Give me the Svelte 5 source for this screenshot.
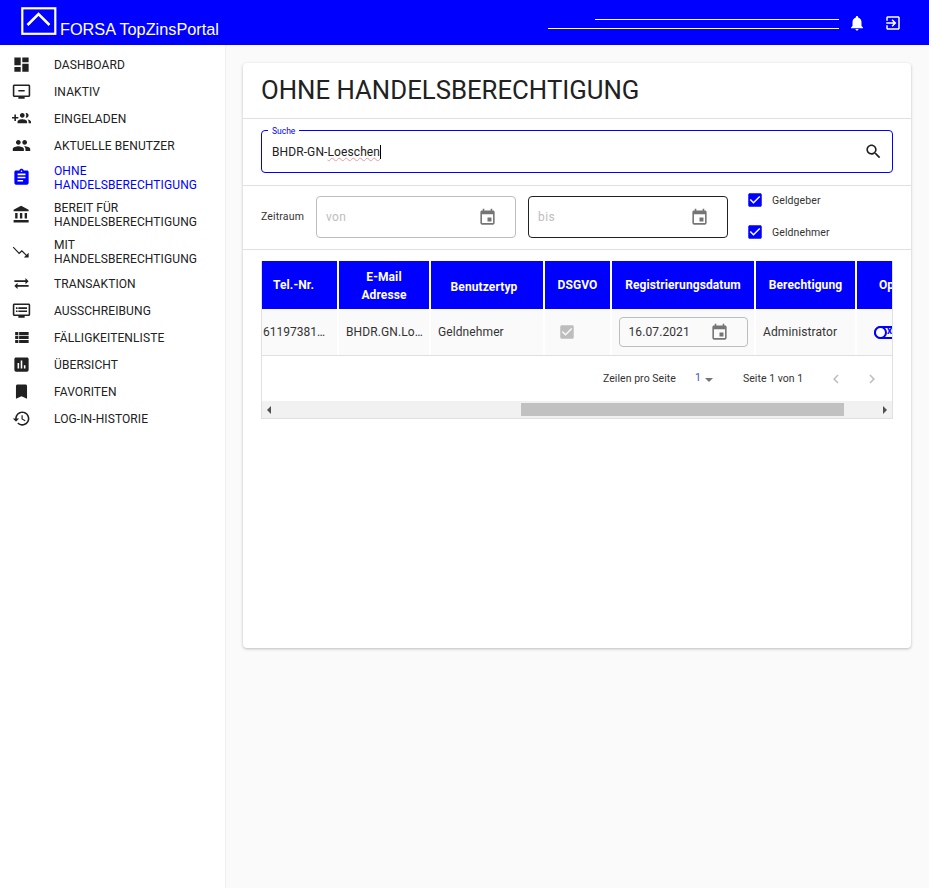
<script>
  const p = {
    dashboard: "M3 13h8V3H3v10zm0 8h8v-6H3v6zm10 0h8V11h-8v10zm0-18v6h8V3h-8z",
    inactive: "M21 3H3c-1.1 0-2 .9-2 2v12c0 1.1.9 2 2 2h5v2h8v-2h5c1.1 0 2-.9 2-2V5c0-1.1-.9-2-2-2zm0 14H3V5h18v12zM8 10h8v2H8z",
    groupAdd: "M8 10H5V7H3v3H0v2h3v3h2v-3h3v-2zm10 1c1.66 0 2.99-1.34 2.99-3S19.66 5 18 5c-.32 0-.63.05-.91.14.57.81.9 1.79.9 2.86s-.34 2.04-.9 2.86c.28.09.59.14.91.14zm-5 0c1.66 0 2.99-1.34 2.99-3S14.66 5 13 5s-3 1.34-3 3 1.34 3 3 3zm6.62 2.16c.83.73 1.38 1.66 1.38 2.84v2h3v-2c0-1.54-2.37-2.49-4.38-2.84zM13 13c-2 0-6 1-6 3v2h12v-2c0-2-4-3-6-3z",
    people: "M16 11c1.66 0 2.99-1.34 2.99-3S17.66 5 16 5c-1.66 0-3 1.34-3 3s1.34 3 3 3zm-8 0c1.66 0 2.99-1.34 2.99-3S9.66 5 8 5C6.34 5 5 6.34 5 8s1.34 3 3 3zm0 2c-2.33 0-7 1.17-7 3.5V19h14v-2.5c0-2.33-4.67-3.5-7-3.5zm8 0c-.29 0-.62.02-.97.05 1.16.84 1.97 1.97 1.97 3.45V19h6v-2.5c0-2.33-4.67-3.5-7-3.5z",
    assignment: "M19 3h-4.18C14.4 1.84 13.3 1 12 1c-1.3 0-2.4.84-2.82 2H5c-1.1 0-2 .9-2 2v14c0 1.1.9 2 2 2h14c1.1 0 2-.9 2-2V5c0-1.1-.9-2-2-2zm-7 0c.55 0 1 .45 1 1s-.45 1-1 1-1-.45-1-1 .45-1 1-1zm2 14H7v-2h7v2zm3-4H7v-2h10v2zm0-4H7V7h10v2z",
    bank: "M4 10v7h3v-7H4zm6 0v7h3v-7h-3zM2 22h19v-3H2v3zm14-12v7h3v-7h-3zm-4.5-9L2 6v2h19V6l-9.5-5z",
    trending: "M2 6L9 13.2L12.5 10L18.5 16L21 13.5V19.5H15L17.4 17.1L12.5 12.2L9 15.4L1 7.1z",
    swap: "M3 8h14V5l4 4-4 4v-3H3zM21 14H7v-3l-4 4 4 4v-3h14z",
    dvr: "M21 3H3c-1.1 0-2 .9-2 2v12c0 1.1.9 2 2 2h5v2h8v-2h5c1.1 0 1.99-.9 1.99-2L23 5c0-1.1-.9-2-2-2zm0 14H3V5h18v12zm-2-9H8v2h11V8zm0 4H8v2h11v-2zM7 8H5v2h2V8zm0 4H5v2h2v-2z",
    viewList: "M4 14h4v-4H4v4zm0 5h4v-4H4v4zM4 9h4V5H4v4zm5 5h12v-4H9v4zm0 5h12v-4H9v4zM9 5v4h12V5H9z",
    assessment: "M19 3H5c-1.1 0-2 .9-2 2v14c0 1.1.9 2 2 2h14c1.1 0 2-.9 2-2V5c0-1.1-.9-2-2-2zM9 17H7v-7h2v7zm4 0h-2V7h2v10zm4 0h-2v-4h2v4z",
    bookmark: "M17 3H7c-1.1 0-1.99.9-1.99 2L5 21l7-3 7 3V5c0-1.1-.9-2-2-2z",
    history: "M13 3c-4.97 0-9 4.03-9 9H1l3.89 3.89.07.14L9 12H6c0-3.87 3.13-7 7-7s7 3.13 7 7-3.13 7-7 7c-1.93 0-3.68-.79-4.94-2.06l-1.42 1.42C8.27 19.99 10.51 21 13 21c4.97 0 9-4.03 9-9s-4.03-9-9-9zm-1 5v5l4.28 2.54.72-1.21-3.5-2.08V8H12z",
    bell: "M12 22c1.1 0 2-.9 2-2h-4c0 1.1.89 2 2 2zm6-6v-5c0-3.07-1.64-5.64-4.5-6.32V4c0-.83-.67-1.5-1.5-1.5s-1.5.67-1.5 1.5v.68C7.63 5.36 6 7.92 6 11v5l-2 2v1h16v-1l-2-2z",
    exit: "M10.09 15.59L11.5 17l5-5-5-5-1.41 1.41L12.67 11H3v2h9.67l-2.58 2.59zM19 3H5c-1.11 0-2 .9-2 2v4h2V5h14v14H5v-4H3v4c0 1.1.89 2 2 2h14c1.1 0 2-.9 2-2V5c0-1.1-.9-2-2-2z",
    search: "M15.5 14h-.79l-.28-.27C15.41 12.59 16 11.11 16 9.5 16 5.91 13.09 3 9.5 3S3 5.91 3 9.5 5.91 16 9.5 16c1.61 0 3.09-.59 4.23-1.57l.27.28v.79l5 4.99L20.49 19l-4.99-5zm-6 0C7.01 14 5 11.99 5 9.5S7.01 5 9.5 5 14 7.01 14 9.5 11.99 14 9.5 14z",
    event: "M17 12h-5v5h5v-5zM16 1v2H8V1H6v2H5c-1.11 0-1.99.9-1.99 2L3 19c0 1.1.89 2 2 2h14c1.1 0 2-.9 2-2V5c0-1.1-.9-2-2-2h-1V1h-2zm3 18H5V8h14v11z",
    check: "M19 3H5c-1.11 0-2 .9-2 2v14c0 1.1.89 2 2 2h14c1.11 0 2-.9 2-2V5c0-1.1-.89-2-2-2zm-9 14l-5-5 1.41-1.41L10 14.17l7.59-7.59L19 8l-9 9z",
    left: "M15.41 7.41L14 6l-6 6 6 6 1.41-1.41L10.83 12z",
    right: "M10 6L8.59 7.41 13.17 12l-4.58 4.59L10 18l6-6z"
  };

  const nav = [
    { icon: p.dashboard, label: "DASHBOARD" },
    { icon: p.inactive, label: "INAKTIV" },
    { icon: p.groupAdd, label: "EINGELADEN" },
    { icon: p.people, label: "AKTUELLE BENUTZER" },
    { icon: p.assignment, label: "OHNE HANDELSBERECHTIGUNG", active: true, tall: true },
    { icon: p.bank, label: "BEREIT FÜR HANDELSBERECHTIGUNG", tall: true },
    { icon: p.trending, label: "MIT HANDELSBERECHTIGUNG", tall: true },
    { icon: p.swap, label: "TRANSAKTION" },
    { icon: p.dvr, label: "AUSSCHREIBUNG" },
    { icon: p.viewList, label: "FÄLLIGKEITENLISTE" },
    { icon: p.assessment, label: "ÜBERSICHT" },
    { icon: p.bookmark, label: "FAVORITEN" },
    { icon: p.history, label: "LOG-IN-HISTORIE" }
  ];
</script>

{#snippet icon(d, size = 18, cls = "")}
  <svg class={cls} width={size} height={size} viewBox="0 0 24 24" fill="currentColor"><path {d} /></svg>
{/snippet}

<div class="page">
  <header>
    <div class="brand">
      <svg class="logo" width="36" height="29" viewBox="0 0 36 29" fill="none" stroke="#fff">
        <rect x="1.3" y="1.3" width="33" height="25.5" stroke-width="2.2" />
        <path d="M6.5 18 L17.5 7 L28.5 18" stroke-width="2.5" />
      </svg>
      <span class="brand-name">FORSA TopZinsPortal</span>
    </div>
    <div class="user-lines">
      <div class="line short"></div>
      <div class="line long"></div>
    </div>
    <div class="head-icons">
      {@render icon(p.bell, 18)}
      {@render icon(p.exit, 18)}
    </div>
  </header>

  <div class="body">
    <nav>
      {#each nav as item}
        <div class="nav-item" class:active={item.active} class:tall={item.tall}>
          <span class="nav-icon">{@render icon(item.icon, 19)}</span>
          <span class="nav-label">{item.label}</span>
        </div>
      {/each}
    </nav>

    <main>
      <section class="card">
        <div class="title-row"><h1>OHNE HANDELSBERECHTIGUNG</h1></div>

        <div class="search-row">
          <div class="search-box">
            <span class="legend">Suche</span>
            <span class="search-text">BHDR-GN-<span class="typo">Loeschen</span><span class="caret"></span></span>
            <span class="search-icon">{@render icon(p.search, 19)}</span>
          </div>
        </div>

        <div class="filter-row">
          <span class="range-label">Zeitraum</span>
          <div class="date-box">
            <span>von</span>
            {@render icon(p.event, 19)}
          </div>
          <div class="date-box focused">
            <span>bis</span>
            {@render icon(p.event, 19)}
          </div>
          <div class="checks">
            <div class="check-row">{@render icon(p.check, 18)}<span>Geldgeber</span></div>
            <div class="check-row">{@render icon(p.check, 18)}<span>Geldnehmer</span></div>
          </div>
        </div>

        <div class="table-area">
          <div class="table">
            <div class="grid head">
              <div class="h-tel">Tel.-Nr.</div>
              <div class="h-mail">E-Mail<br />Adresse</div>
              <div class="h-type">Benutzertyp</div>
              <div>DSGVO</div>
              <div>Registrierungsdatum</div>
              <div>Berechtigung</div>
              <div class="clip">Op</div>
            </div>
            <div class="grid row">
              <div class="tel">61197381…</div>
              <div class="mail">BHDR.GN.Lo…</div>
              <div class="type">Geldnehmer</div>
              <div class="dsgvo">{@render icon(p.check, 18)}</div>
              <div class="center">
                <div class="row-date">
                  <span>16.07.2021</span>
                  {@render icon(p.event, 19)}
                </div>
              </div>
              <div class="type">Administrator</div>
              <div class="toggle-cell">
                <div class="toggle"><i></i><b>x</b></div>
              </div>
            </div>
            <div class="pager">
              <span class="per-page">Zeilen pro Seite</span>
              <span class="count">1</span>
              <span class="caret-down"></span>
              <span class="page-of">Seite 1 von 1</span>
              {@render icon(p.left, 18)}
              {@render icon(p.right, 18)}
            </div>
            <div class="scrollbar">
              <span class="arrow-l"></span>
              <div class="thumb"></div>
              <span class="arrow-r"></span>
            </div>
          </div>
        </div>
      </section>
    </main>
  </div>
</div>

<style>
  :global(body) {
    background: #fafafa;
    font-family: Roboto, "Noto Sans", sans-serif;
    color: #212121;
  }
  svg {
    display: block;
    flex: none;
  }
  .page {
    display: flex;
    flex-direction: column;
    height: 888px;
    overflow: hidden;
  }

  header {
    height: 45px;
    flex: none;
    background: #0000ff;
    color: #fff;
    display: flex;
    align-items: flex-start;
  }
  .brand {
    display: flex;
    align-items: flex-end;
    margin-left: 21px;
    padding-top: 7px;
    gap: 3px;
    width: 527px;
  }
  .brand-name {
    font-family: "Liberation Sans", Arial, sans-serif;
    font-size: 16.3px;
    line-height: 18px;
    margin-bottom: -2px;
  }
  .user-lines {
    width: 291px;
    padding-top: 19px;
  }
  .line {
    height: 1px;
    background: #fff;
    margin-left: auto;
  }
  .line.short {
    width: 244px;
    margin-bottom: 8px;
  }
  .line.long {
    width: 291px;
  }
  .head-icons {
    display: flex;
    gap: 18px;
    margin-left: 9px;
    padding-top: 14px;
  }

  .body {
    flex: 1;
    display: flex;
    min-height: 0;
  }
  nav {
    width: 225px;
    flex: none;
    background: #fff;
    border-right: 1px solid #f0f0f0;
    padding-top: 6px;
  }
  .nav-item {
    display: flex;
    align-items: center;
    height: 27px;
    padding-left: 12px;
    font-size: 12px;
    line-height: 14px;
    letter-spacing: 0.1px;
    color: #212121;
  }
  .nav-item.tall {
    height: 37px;
  }
  .nav-item.active {
    color: #0000ff;
  }
  .nav-icon {
    width: 42px;
    flex: none;
  }
  .nav-label {
    width: 160px;
  }

  main {
    flex: 1;
    padding: 18px 18px 0 17px;
    min-width: 0;
  }
  .card {
    height: 585px;
    background: #fff;
    border-radius: 4px;
    box-shadow: 0 1px 3px rgba(0, 0, 0, 0.25);
  }
  .title-row {
    height: 55px;
    border-bottom: 1px solid #e0e0e0;
    padding-left: 18px;
    display: flex;
    align-items: center;
  }
  h1 {
    margin: 0 0 2px;
    font-size: 25.75px;
    font-weight: 400;
    color: #212121;
    line-height: 52px;
  }
  .search-row {
    border-bottom: 1px solid #e0e0e0;
    padding: 11px 18px 0;
    box-sizing: border-box;
    height: 67px;
  }
  .search-box {
    position: relative;
    height: 43px;
    box-sizing: border-box;
    border: 1px solid #0000ff;
    border-radius: 4px;
    display: flex;
    align-items: center;
    justify-content: space-between;
    padding: 0 9px 0 10px;
  }
  .legend {
    position: absolute;
    left: 6px;
    top: -5px;
    padding: 0 4px;
    background: #fff;
    font-size: 8.5px;
    line-height: 10px;
    color: #0000ff;
  }
  .search-text {
    font-size: 12px;
    letter-spacing: 0.1px;
    line-height: 16px;
    color: #212121;
    display: flex;
  }
  .typo {
    text-decoration: underline wavy #ef9a9a 1px;
    text-underline-offset: 1px;
  }
  .caret {
    width: 1px;
    height: 14px;
    margin-top: 1px;
    background: #000;
  }
  .search-icon {
    color: #212121;
  }

  .filter-row {
    height: 64px;
    box-sizing: border-box;
    border-bottom: 1px solid #e0e0e0;
    padding: 10px 0 0 18px;
    display: flex;
    align-items: flex-start;
  }
  .range-label {
    width: 55px;
    font-size: 10.5px;
    line-height: 42px;
    letter-spacing: 0.15px;
    color: #333;
  }
  .date-box {
    width: 200px;
    height: 42px;
    box-sizing: border-box;
    border: 1px solid #bdbdbd;
    border-radius: 4px;
    display: flex;
    align-items: center;
    justify-content: space-between;
    padding: 0 18px 0 9px;
    font-size: 12px;
    letter-spacing: 0.4px;
    color: #bdbdbd;
    margin-right: 12px;
  }
  .date-box svg {
    color: #757575;
  }
  .date-box.focused {
    border-color: #212121;
    margin-right: 19px;
  }
  .checks {
    margin-top: -5px;
    display: flex;
    flex-direction: column;
    gap: 14px;
  }
  .check-row {
    display: flex;
    align-items: center;
    height: 18px;
    gap: 8px;
    margin-left: -1px;
    color: #0000ff;
  }
  .check-row span {
    font-size: 10.5px;
    letter-spacing: 0.1px;
    color: #333;
  }

  .table-area {
    padding: 11px 18px 0;
  }
  .table {
    border: 1px solid #e0e0e0;
    border-top: none;
    overflow: hidden;
    height: 158px;
    box-sizing: border-box;
  }
  .grid {
    display: grid;
    grid-template-columns: 75px 90px 112px 65px 142px 99px 60px;
    column-gap: 2px;
    width: 680px;
  }
  .head {
    height: 48px;
    color: #fff;
    font-size: 12px;
    font-weight: 700;
    letter-spacing: 0.1px;
    line-height: 18px;
    text-align: center;
  }
  .head > div {
    background: #0000ff;
    display: flex;
    align-items: center;
    justify-content: center;
    white-space: nowrap;
  }
  .head .h-tel {
    padding-right: 12px;
  }
  .head .h-mail {
    padding-top: 2px;
  }
  .head .h-type {
    padding: 3px 6px 0 0;
  }
  .head .clip {
    justify-content: flex-start;
    padding-left: 22px;
  }
  .row {
    height: 47px;
    box-sizing: border-box;
    border-bottom: 1px solid #e0e0e0;
    font-size: 12px;
    letter-spacing: 0.1px;
    color: #333;
  }
  .row > div {
    background: #fafafa;
    display: flex;
    align-items: center;
    white-space: nowrap;
    overflow: hidden;
  }
  .row .tel {
    padding-left: 1px;
    letter-spacing: 0;
  }
  .row .mail {
    padding-left: 7px;
  }
  .row .type {
    padding-left: 7px;
  }
  .row .dsgvo {
    padding-left: 13px;
    color: #bdbdbd;
  }
  .row .center {
    justify-content: center;
  }
  .row-date {
    width: 129px;
    height: 30px;
    box-sizing: border-box;
    border: 1px solid #bdbdbd;
    border-radius: 4px;
    display: flex;
    align-items: center;
    justify-content: space-between;
    padding: 0 18px 0 9px;
    color: #333;
  }
  .row-date svg {
    color: #757575;
  }
  .toggle-cell {
    padding-left: 17px;
  }
  .toggle {
    width: 34px;
    height: 13px;
    box-sizing: border-box;
    border: 2px solid #0000ff;
    border-radius: 7px;
    position: relative;
    flex: none;
  }
  .toggle i {
    position: absolute;
    left: -2px;
    top: -2px;
    width: 13px;
    height: 13px;
    box-sizing: border-box;
    border: 2px solid #0000ff;
    border-radius: 50%;
    background: #fff;
  }
  .toggle b {
    position: absolute;
    left: 11px;
    top: -2px;
    font-size: 10px;
    line-height: 10px;
    color: #0000ff;
  }
  .pager {
    height: 45px;
    display: flex;
    align-items: center;
    font-size: 10.5px;
    letter-spacing: 0.05px;
    color: #333;
    padding-left: 341px;
    white-space: nowrap;
  }
  .pager svg {
    color: #bdbdbd;
    margin-right: 18px;
  }
  .count {
    margin-left: 19px;
    color: #3f51b5;
    margin-top: -2px;
  }
  .caret-down {
    margin-left: 4px;
    border: 4.5px solid transparent;
    border-top: 4.5px solid #757575;
    border-bottom: none;
    margin-top: 2px;
  }
  .page-of {
    margin: 0 24px 0 30px;
  }
  .scrollbar {
    height: 17px;
    background: #f1f1f1;
    position: relative;
    display: flex;
    align-items: center;
  }
  .thumb {
    position: absolute;
    left: 259px;
    width: 323px;
    top: 2px;
    height: 13px;
    background: #c1c1c1;
  }
  .arrow-l,
  .arrow-r {
    position: absolute;
    top: 5px;
    border: 4px solid transparent;
    border-left: none;
    border-right: 4px solid #505050;
    left: 5px;
  }
  .arrow-r {
    left: auto;
    right: 5px;
    border-right: none;
    border-left: 4px solid #505050;
  }
</style>
